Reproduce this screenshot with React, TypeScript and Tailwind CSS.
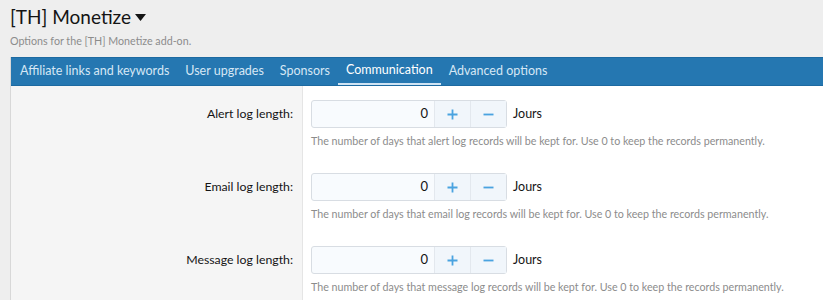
import React from "react";

const tabs = ["Affiliate links and keywords", "User upgrades", "Sponsors", "Communication", "Advanced options"];

const rows = [
  { label: "Alert log length:", kind: "alert" },
  { label: "Email log length:", kind: "email" },
  { label: "Message log length:", kind: "message" },
];

function Spinner() {
  return (
    <div className="flex items-center gap-[6px]">
      <div className="flex h-[28px] w-[196px] rounded-[3px] border border-[#d8dde3] bg-[#f8fbfe] text-[13px]">
        <div className="flex flex-1 items-center justify-end pr-[6px] text-[#141414]">0</div>
        <button className="flex w-[36px] items-center justify-center border-l border-[#e3e8ee] bg-[#f1f6fb]">
          <svg width="11" height="11" viewBox="0 0 11 11">
            <path d="M5.5 0.5 V10.5 M0.5 5.5 H10.5" stroke="#4aa3e0" strokeWidth="1.8" />
          </svg>
        </button>
        <button className="flex w-[36px] items-center justify-center border-l border-[#e3e8ee] bg-[#f1f6fb]">
          <svg width="11" height="11" viewBox="0 0 11 11">
            <path d="M0.5 5.5 H10.5" stroke="#4aa3e0" strokeWidth="1.8" />
          </svg>
        </button>
      </div>
      <span className="text-[12.5px] text-[#141414]">Jours</span>
    </div>
  );
}

export default function App() {
  return (
    <div className="h-[300px] overflow-hidden bg-[#eeeeee] pl-[10px] font-['Segoe_UI','Lato',sans-serif] text-[#141414]">
      <div className="flex items-center gap-[4px] pt-[3px]">
        <h1 className="text-[19px] leading-[28px] text-[#141414]">[TH] Monetize</h1>
        <svg width="11" height="7" viewBox="0 0 11 7" className="mt-[1px]">
          <path d="M0 0 H11 L5.5 7 Z" fill="#141414" />
        </svg>
      </div>
      <p className="mt-[2px] text-[10.7px] leading-[16px] text-[#8c8c8c]">Options for the [TH] Monetize add-on.</p>

      <div className="mt-[8px] border-l border-[#d8d8d8]">
        <div className="flex h-[29px] items-stretch border-y border-[#1d6aa1] bg-[#2577b1] pl-[1px]">
          {tabs.map((t) => (
            <div
              key={t}
              className={
                t === "Communication"
                  ? "flex items-center border-b-2 border-[#cfe3f3] px-[8px] text-[12.5px] text-white"
                  : "flex items-center px-[8px] text-[12.5px] text-[#d6e7f5]"
              }
            >
              {t}
            </div>
          ))}
        </div>

        {rows.map((r) => (
          <div key={r.kind} className="flex">
            <div className="w-[291px] shrink-0 bg-[#f5f5f5] pr-[9px] pt-[14px] text-right">
              <div className="flex h-[28px] items-center justify-end text-[12.3px] text-[#141414]">{r.label}</div>
            </div>
            <div className="flex-1 border-l border-[#e5e5e5] bg-white pb-[11px] pl-[8px] pt-[14px]">
              <Spinner />
              <p className="mt-[5px] text-[10.7px] leading-[15px] text-[#8c8c8c]">
                The number of days that {r.kind} log records will be kept for. Use 0 to keep the records permanently.
              </p>
            </div>
          </div>
        ))}
      </div>
    </div>
  );
}
